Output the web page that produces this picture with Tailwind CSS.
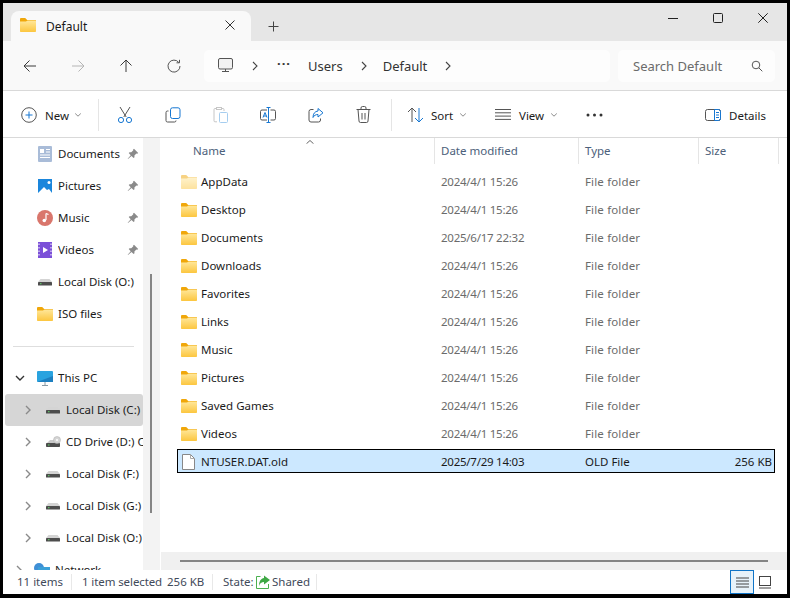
<!DOCTYPE html>
<html lang="en">
  <head>
    <meta charset="UTF-8" />
    <title>Default - File Explorer</title>
    <script src="https://cdn.jsdelivr.net/npm/@tailwindcss/browser@4"></script>
  </head>
  <body class="w-[790px] h-[598px] overflow-hidden bg-black pt-[3px] pl-[3px] pr-[3px] pb-[4px] font-['Noto_Sans','Open_Sans',sans-serif] text-[11.5px] text-[#1b1b1b]">
    <!-- shared icons -->
    <svg class="absolute w-0 h-0">
      <defs>
        <linearGradient id="fg" x1="0" y1="0" x2="0" y2="1">
          <stop offset="0" stop-color="#ffe79a" />
          <stop offset="1" stop-color="#fcc63f" />
        </linearGradient>
        <symbol id="folder" viewBox="0 0 16 14">
          <path d="M0 1.2C0 .5.5 0 1.2 0h4l2 2H15c.6 0 1 .4 1 1v2H0z" fill="#f0a70a" />
          <path d="M0 3.6h6l1.6-1H15c.6 0 1 .4 1 1V13c0 .6-.4 1-1 1H1c-.6 0-1-.4-1-1z" fill="url(#fg)" />
        </symbol>
        <symbol id="disk" viewBox="0 0 14 8">
          <path d="M2.5 1h9L14 4H0z" fill="#d4d4d4" />
          <rect x="0" y="4" width="14" height="3.500" rx=".6" fill="#4d4d4d" />
          <rect x="2" y="5.200" width="1.500" height="1" fill="#63d56a" />
        </symbol>
        <symbol id="pin" viewBox="0 0 12 12">
          <path d="M7 .8l4.200 4.200-1 .7-.8-.2-2 2 .1 1.700-.9.9-2.100-2.100L1 11l-.3-.3 3-3.500-2-2.100.9-.9 1.700.1 2-2-.2-.8z" fill="#8a8a8a" />
        </symbol>
        <symbol id="chev" viewBox="0 0 8 12">
          <path d="M2 2l4 4-4 4" fill="none" stroke="#8a8a8a" stroke-width="1.400" />
        </symbol>
        <symbol id="crumb" viewBox="0 0 8 12">
          <path d="M2 2l4 4-4 4" fill="none" stroke="#444" stroke-width="1.100" />
        </symbol>
        <symbol id="down" viewBox="0 0 8 6">
          <path d="M1.200 1.500L4 4.200l2.800-2.700" fill="none" stroke="#8c8c8c" stroke-width="1" />
        </symbol>
      </defs>
    </svg>

    <div class="w-[784px] h-[591px] flex flex-col bg-white overflow-hidden">
      <!-- title bar -->
      <div class="h-[38px] shrink-0 flex bg-[#e6e6e6]">
        <div class="ml-[8px] mt-[8px] w-[240px] h-[30px] rounded-t-lg bg-[#f9f9f9] flex items-center">
          <svg class="ml-[9px] w-[16px] h-[14px] -mt-[2px]"><use href="#folder" /></svg>
          <span class="ml-[10px] pt-[1px] text-[12px] text-[#1a1a1a]">Default</span>
          <svg class="ml-auto mr-[16px] w-[10px] h-[10px] -mt-[3px]" viewBox="0 0 10 10"><path d="M.5.500l9 9m0-9l-9 9" stroke="#333" fill="none" /></svg>
        </div>
        <svg class="ml-[17px] mt-[18px] w-[11px] h-[11px]" viewBox="0 0 11 11"><path d="M5.500.5v10M.5 5.500h10" stroke="#444" fill="none" /></svg>
        <div class="ml-auto flex items-start pt-[10px] mr-[19px] gap-[35px]">
          <svg class="w-[10px] h-[10px]" viewBox="0 0 10 10"><path d="M0 5.500h10" stroke="#222" fill="none" /></svg>
          <svg class="w-[10px] h-[10px]" viewBox="0 0 10 10"><rect x=".5" y=".5" width="9" height="9" rx="1" stroke="#222" fill="none" /></svg>
          <svg class="w-[10px] h-[10px]" viewBox="0 0 10 10"><path d="M.3.3l9.400 9.400m0-9.400L.3 9.700" stroke="#222" fill="none" /></svg>
        </div>
      </div>

      <!-- navigation bar -->
      <div class="h-[50px] shrink-0 flex items-center bg-[#f9f9f9] border-b border-[#d9d9d9]">
        <svg class="ml-[20px] w-[14px] h-[14px]" viewBox="0 0 14 14"><path d="M13 7H1m5.500-5.500L1 7l5.500 5.500" stroke="#3a3a3a" fill="none" /></svg>
        <svg class="ml-[34px] w-[14px] h-[14px]" viewBox="0 0 14 14"><path d="M1 7h12M7.500 1.500L13 7l-5.500 5.500" stroke="#b5b5b5" fill="none" /></svg>
        <svg class="ml-[34px] w-[14px] h-[14px]" viewBox="0 0 14 14"><path d="M7 13V1M1.500 6.500L7 1l5.500 5.500" stroke="#3a3a3a" fill="none" /></svg>
        <svg class="ml-[34px] w-[14px] h-[14px]" viewBox="0 0 14 14"><path d="M11.800 3.500A6 6 0 1 0 13 7M12.500.8v3h-3" stroke="#555" fill="none" /></svg>
        <div class="ml-[23px] w-[406px] h-[32px] rounded-[5px] bg-[#fdfdfd] flex items-center text-[13px] text-[#333]">
          <svg class="ml-[14px] w-[15px] h-[15px]" viewBox="0 0 15 15"><rect x=".5" y=".5" width="14" height="10.500" rx="1.500" fill="#f2f2f2" stroke="#555" /><path d="M4 13.500h7M7.500 11v2.500" stroke="#555" /></svg>
          <svg class="ml-[18px] w-[8px] h-[12px]"><use href="#crumb" /></svg>
          <span class="ml-[18px] tracking-[1px] font-bold text-[#333] -mt-[3px]">···</span>
          <span class="ml-[17px] pt-[2px]">Users</span>
          <svg class="ml-[17px] w-[8px] h-[12px]"><use href="#crumb" /></svg>
          <span class="ml-[15px] pt-[2px]">Default</span>
          <svg class="ml-[17px] w-[8px] h-[12px]"><use href="#crumb" /></svg>
        </div>
        <div class="ml-[8px] w-[157px] h-[32px] rounded-[5px] bg-[#fdfdfd] flex items-center text-[13px] text-[#6b6b6b]">
          <span class="ml-[15px] pt-[2px]">Search Default</span>
          <svg class="ml-auto mr-[12px] w-[12px] h-[12px]" viewBox="0 0 12 12"><circle cx="5" cy="5" r="3.800" stroke="#555" fill="none" /><path d="M7.800 7.800l3.500 3.500" stroke="#555" /></svg>
        </div>
      </div>

      <!-- command bar -->
      <div class="h-[47px] shrink-0 pt-[1px] flex items-center border-b border-[#d9d9d9] bg-white">
        <svg class="ml-[18px] w-[16px] h-[16px]" viewBox="0 0 16 16"><circle cx="8" cy="8" r="7.300" stroke="#555" fill="none" /><path d="M8 4.500v7M4.500 8h7" stroke="#1677d2" fill="none" /></svg>
        <span class="ml-[8px] w-[24px] pt-[2px] shrink-0">New</span>
        <svg class="ml-[5px] w-[8px] h-[6px]"><use href="#down" /></svg>
        <div class="ml-[16px] w-px h-[32px] bg-[#e5e5e5]"></div>
        <svg class="ml-[18px] w-[16px] h-[18px]" viewBox="0 0 16 18"><path d="M3 1l6.200 10M13 1L6.800 11" stroke="#555" fill="none" /><circle cx="4" cy="14" r="2.600" stroke="#1677d2" fill="none" /><circle cx="12" cy="14" r="2.600" stroke="#1677d2" fill="none" /></svg>
        <svg class="ml-[32px] w-[16px] h-[16px]" viewBox="0 0 16 16"><path d="M3.500 4H2.500A1.500 1.500 0 0 0 1 5.500v8A1.500 1.500 0 0 0 2.500 15h7a1.500 1.500 0 0 0 1.500-1.500" stroke="#555" fill="none" /><rect x="5.500" y=".8" width="9.500" height="10.700" rx="2" stroke="#1677d2" fill="none" /></svg>
        <svg class="ml-[32px] w-[15px] h-[16px]" viewBox="0 0 15 16"><path d="M4 14.800H2a1 1 0 0 1-1-1V2.500a1 1 0 0 1 1-1h8a1 1 0 0 1 1 1v1.500" stroke="#c6c6c6" fill="none" /><rect x="3.500" y=".5" width="5" height="2" fill="#fff" stroke="#c6c6c6" /><rect x="6.500" y="5.500" width="8" height="10" rx="1" stroke="#a5cdef" fill="none" /></svg>
        <svg class="ml-[32px] w-[16px] h-[16px]" viewBox="0 0 16 16"><path d="M7 3H2a1.500 1.500 0 0 0-1.500 1.500v7A1.500 1.500 0 0 0 2 13h5m3.500-10H14a1.500 1.500 0 0 1 1.500 1.500v7A1.500 1.500 0 0 1 14 13h-3.500" stroke="#555" fill="none" /><path d="M6.500.5h4M6.500 15.500h4M8.500.5v15" stroke="#1677d2" fill="none" /><path d="M3 10.500L5 5.500l2 5M3.700 9h2.600" stroke="#1677d2" fill="none" /></svg>
        <svg class="ml-[32px] w-[16px] h-[16px]" viewBox="0 0 16 16"><path d="M5.500 2.500H3A2 2 0 0 0 1 4.500V13a2 2 0 0 0 2 2h7.500a2 2 0 0 0 2-2v-1.500" stroke="#555" fill="none" /><path d="M10 1.500l5 4.300-5 4.200V7.500C7.500 7.500 6 8.500 5 10.500c0-4 2-6.200 5-6.500z" stroke="#1677d2" fill="none" /></svg>
        <svg class="ml-[32px] w-[15px] h-[17px]" viewBox="0 0 15 17"><path d="M.5 3.500h14M5 3.500V2a1.500 1.500 0 0 1 1.500-1.500h2A1.500 1.500 0 0 1 10 2v1.500M2 3.500l1 11.500a1.500 1.500 0 0 0 1.500 1.500h6A1.500 1.500 0 0 0 12 15l1-11.500M6 7v6.500M9 7v6.500" stroke="#555" fill="none" /></svg>
        <div class="ml-[20px] w-px h-[32px] bg-[#e5e5e5]"></div>
        <svg class="ml-[15px] w-[17px] h-[16px]" viewBox="0 0 17 16"><path d="M5 15V1M1 5l4-4 4 4" stroke="#555" fill="none" /><path d="M12 1v14M8 11l4 4 4-4" stroke="#1677d2" fill="none" /></svg>
        <span class="ml-[7px] w-[24px] pt-[2px] shrink-0">Sort</span>
        <svg class="ml-[4px] w-[8px] h-[6px]"><use href="#down" /></svg>
        <svg class="ml-[28px] w-[16px] h-[11px]" viewBox="0 0 16 11"><path d="M0 .5h16M0 3.800h16M0 7.100h16M0 10.400h16" stroke="#555" fill="none" /></svg>
        <span class="ml-[8px] w-[27px] pt-[2px] shrink-0">View</span>
        <svg class="ml-[4px] w-[8px] h-[6px]"><use href="#down" /></svg>
        <svg class="ml-[28px] w-[17px] h-[4px]" viewBox="0 0 17 4"><circle cx="2" cy="2" r="1.500" fill="#333" /><circle cx="8.500" cy="2" r="1.500" fill="#333" /><circle cx="15" cy="2" r="1.500" fill="#333" /></svg>
        <svg class="ml-[102px] w-[16px] h-[12px]" viewBox="0 0 16 12"><rect x=".5" y=".5" width="15" height="11" rx="2" stroke="#555" fill="none" /><path d="M9.500.5h4a2 2 0 0 1 2 2v7a2 2 0 0 1-2 2h-4zM11 3.500h3M11 6h3M11 8.500h3" stroke="#1677d2" fill="none" /></svg>
        <span class="ml-[8px] pt-[2px]">Details</span>
      </div>

      <!-- sidebar + file list -->
      <div class="flex-1 min-h-0 flex">
        <div id="tree" class="w-[140px] shrink-0 overflow-hidden"></div>
        <div class="w-[17px] shrink-0 bg-[#f3f3f3] pl-[7px] pt-[136px]">
          <div class="w-[2px] h-[239px] bg-[#858585]"></div>
        </div>
        <div class="flex-1 min-w-0 flex flex-col pl-[1px]">
          <div class="relative h-[26px] shrink-0 grid grid-cols-[274px_144px_120px_80px] text-[#4c607a]">
            <svg class="absolute left-[145px] top-[2px] w-[8px] h-[4px]" viewBox="0 0 8 4"><path d="M.5 3.700L4 .5l3.500 3.200" stroke="#666" fill="none" /></svg>
            <div class="pl-[32px] pt-[4px] border-r border-[#e5e5e5]">Name</div>
            <div class="pl-[6px] pt-[4px] border-r border-[#e5e5e5]">Date modified</div>
            <div class="pl-[6px] pt-[4px] border-r border-[#e5e5e5]">Type</div>
            <div class="pl-[6px] pt-[4px] border-r border-[#e5e5e5]">Size</div>
          </div>
          <div id="files" class="flex-1 pt-[5px] pl-[16px] flex flex-col gap-[4px]"></div>
          <div class="h-[18px] shrink-0 bg-[#f0f0f0] flex items-center pl-[19px]">
            <div class="w-[588px] h-[2px] bg-[#858585]"></div>
          </div>
        </div>
      </div>

      <!-- status bar -->
      <div class="h-[24px] shrink-0 flex items-center bg-white text-[#3f4a5a] whitespace-nowrap">
        <span class="ml-[14px] w-[46px] shrink-0">11 items</span>
        <div class="ml-[8px] w-px h-[16px] bg-[#e8e8e8]"></div>
        <span class="ml-[10px] w-[80px] shrink-0 tracking-[-0.1px]">1 item selected</span>
        <span class="ml-[5px] w-[36px] shrink-0">256 KB</span>
        <div class="ml-[9px] w-px h-[16px] bg-[#e8e8e8]"></div>
        <span class="ml-[10px] w-[30px] shrink-0">State:</span>
        <svg class="ml-[2px] w-[16px] h-[15px]" viewBox="0 0 15 15"><path d="M5 1.500H1v12h12V9" stroke="#4bb04f" fill="#fff" /><path d="M8.500.5l6 4.500-6 4.500V7C6 7 4.500 8 3.500 11c0-5 2-7.500 5-8z" fill="#3fa845" /></svg>
        <span class="ml-[1px] w-[36px] shrink-0">Shared</span>
        <div class="ml-[8px] w-px h-[16px] bg-[#e8e8e8]"></div>
        <div class="ml-auto w-[24px] h-[24px] border border-[#0f74c7] bg-[#e6f2fa] flex items-center justify-center">
          <svg class="w-[13px] h-[11px]" viewBox="0 0 13 11"><path d="M0 1h13M0 4h13M0 7h13M0 10h13" stroke="#444" fill="none" /></svg>
        </div>
        <svg class="ml-[5px] mr-[15px] w-[13px] h-[13px]" viewBox="0 0 13 13"><rect x=".5" y=".5" width="11" height="9" stroke="#444" fill="none" /><path d="M0 12h12" stroke="#444" /></svg>
      </div>
    </div>

    <script>
      const ic = (id, cls) => `<svg class="${cls}"><use href="#${id}" /></svg>`;

      const quick = {
        Documents: `<svg class="ml-[35px] w-[14px] h-[16px] shrink-0" viewBox="0 0 14 16"><rect width="14" height="16" rx="1" fill="#a9bcd8" /><path d="M2 3h4v4H2z" fill="#fff" /><path d="M8 3.500h4M8 6h4M2 9h10M2 11.500h10" stroke="#fff" /></svg>`,
        Pictures: `<svg class="ml-[35px] w-[14px] h-[14px] shrink-0" viewBox="0 0 14 14"><rect width="14" height="14" fill="#1a86dc" /><path d="M0 14l6-6 3 3 2-1 3 4z" fill="#ffffff" /><circle cx="11" cy="3.500" r="1.500" fill="#fff" /></svg>`,
        Music: `<svg class="ml-[34px] -mr-[1px] w-[16px] h-[16px] shrink-0" viewBox="0 0 16 16"><circle cx="8" cy="8" r="8" fill="#d9766c" /><path d="M9 3.500v6.500" stroke="#fff" stroke-width="1.200" /><path d="M9 3.500l2.500 1" stroke="#fff" stroke-width="1.200" /><circle cx="7.300" cy="10.500" r="1.800" fill="#fff" /></svg>`,
        Videos: `<svg class="ml-[35px] w-[14px] h-[16px] shrink-0" viewBox="0 0 14 16"><rect width="14" height="16" fill="#7b4fd8" /><path d="M5 5l5 3-5 3z" fill="#fff" /><path d="M1 1.500v13M13 1.500v13" stroke="#fff" stroke-dasharray="1.500 2" /></svg>`,
      };

      let tree = "";
      for (const name in quick) {
        tree += `<div class="h-8 flex items-center">${quick[name]}<span class="ml-[6px] w-[69px] truncate">${name}</span>${ic("pin", "w-[12px] h-[12px]")}</div>`;
      }
      tree += `<div class="h-8 flex items-center">${ic("disk", "ml-[35px] w-[14px] h-[8px]")}<span class="ml-[6px]">Local Disk (O:)</span></div>`;
      tree += `<div class="h-8 flex items-center">${ic("folder", "ml-[34px] w-[16px] h-[14px]")}<span class="ml-[5px]">ISO files</span></div>`;
      tree += `<div class="h-8 flex items-center"><div class="ml-[10px] w-[121px] h-px bg-[#dedede]"></div></div>`;
      tree += `<div class="h-8 flex items-center"><svg class="ml-[12px] w-[10px] h-[7px]" viewBox="0 0 10 7"><path d="M1 1l4 4 4-4" stroke="#333" stroke-width="1.400" fill="none" /></svg><svg class="ml-[12px] w-[16px] h-[15px]" viewBox="0 0 16 15"><rect width="16" height="11" rx="1" fill="#2aa3df" /><path d="M0 11h16L16 5z" fill="#1d7fc0" /><path d="M8 11v3M5 14.500h6" stroke="#8a9aa5" /></svg><span class="ml-[5px]">This PC</span></div>`;

      const drives = ["Local Disk (C:)", "CD Drive (D:) CD_ROM", "Local Disk (F:)", "Local Disk (G:)", "Local Disk (O:)"];
      drives.forEach((d, i) => {
        const icon = d.startsWith("CD")
          ? `<svg class="ml-[14px] w-[15px] h-[12px] shrink-0" viewBox="0 0 15 12"><path d="M1 7l3-3h7v3z" fill="#c9c9c9" /><rect y="7" width="14" height="4" rx=".8" fill="#4d4d4d" /><rect x="2" y="8.500" width="1.500" height="1" fill="#63d56a" /><circle cx="11" cy="4" r="3.500" fill="#d5d5d5" stroke="#aaa" stroke-width=".5" /><circle cx="11" cy="4" r="1" fill="#fff" /></svg>`
          : ic("disk", "ml-[14px] w-[14px] h-[8px] shrink-0");
        const bg = i === 0 ? "bg-[#d6d6d6]" : "";
        const gap = d.startsWith("CD") ? "ml-[5px]" : "ml-[6px]";
        tree += `<div class="h-8 ml-[2px] rounded-[3px] flex items-center overflow-hidden ${bg}">${ic("chev", "ml-[19px] w-[8px] h-[12px] shrink-0")}${icon}<span class="${gap} whitespace-nowrap">${d}</span></div>`;
      });
      tree += `<div class="h-8 flex items-center"><svg class="ml-[12px] w-[8px] h-[12px]"><use href="#chev" /></svg><svg class="ml-[11px] w-[16px] h-[15px]" viewBox="0 0 16 15"><circle cx="5" cy="5" r="5" fill="#3f8fd6" /><rect x="4" y="4" width="12" height="9" fill="#3aa0d8" /></svg><span class="ml-[5px]">Network</span></div>`;
      document.getElementById("tree").innerHTML = tree;

      const rows = [
        ["AppData", "2024/4/1 15:26"],
        ["Desktop", "2024/4/1 15:26"],
        ["Documents", "2025/6/17 22:32"],
        ["Downloads", "2024/4/1 15:26"],
        ["Favorites", "2024/4/1 15:26"],
        ["Links", "2024/4/1 15:26"],
        ["Music", "2024/4/1 15:26"],
        ["Pictures", "2024/4/1 15:26"],
        ["Saved Games", "2024/4/1 15:26"],
        ["Videos", "2024/4/1 15:26"],
      ];
      let files = "";
      rows.forEach(([name, date], i) => {
        const fade = i === 0 ? "opacity-50" : "";
        files += `<div class="h-[24px] w-[598px] grid grid-cols-[257px_144px_120px_77px] items-center border border-transparent pt-[2px]">
          <div class="flex items-center">${ic("folder", `ml-[3px] w-[16px] h-[14px] ${fade}`)}<span class="ml-[4px]">${name}</span></div>
          <div class="pl-[6px] tracking-[-0.25px] text-[#6b6b6b]">${date}</div>
          <div class="pl-[6px] tracking-[0.15px] text-[#6b6b6b]">File folder</div>
          <div></div>
        </div>`;
      });
      files += `<div class="h-[24px] w-[598px] grid grid-cols-[257px_144px_120px_75px] items-center border border-black bg-[#cce8ff] pt-[2px]">
        <div class="flex items-center"><svg class="ml-[4px] w-[13px] h-[16px]" viewBox="0 0 13 16"><path d="M.5.5h8l4 4v11H.5z" fill="#fff" stroke="#888" /><path d="M8.500.5v4h4" fill="none" stroke="#aaa" /></svg><span class="ml-[6px]">NTUSER.DAT.old</span></div>
        <div class="pl-[6px] tracking-[-0.25px]">2025/7/29 14:03</div>
        <div class="pl-[6px]">OLD File</div>
        <div class="text-right pr-[2px]">256 KB</div>
      </div>`;
      document.getElementById("files").innerHTML = files;
    </script>
  </body>
</html>
